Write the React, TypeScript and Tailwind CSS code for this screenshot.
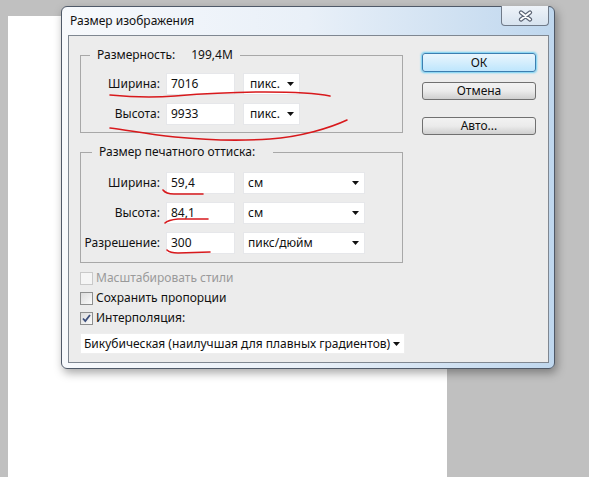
import React from 'react';
import clsx from 'clsx';

const Arrow = () => (
  <svg width="7" height="4" viewBox="0 0 7 4" className="shrink-0">
    <path d="M0 0h7L3.5 4z" fill="#111" />
  </svg>
);

interface SizeRowProps {
  label: string;
  value: string;
  unit: string;
  wide?: boolean;
}

const SizeRow: React.FC<SizeRowProps> = ({ label, value, unit, wide = false }) => (
  <div className="flex items-center h-[22px]">
    <span className="w-[79px] text-right">{label}</span>
    <div className="ml-[6px] w-[69px] h-[22px] bg-white border border-[#e6e7ea] pl-[4px] flex items-center">
      {value}
    </div>
    <div
      className={clsx(
        'ml-[8px] h-[22px] bg-white border border-[#e6e7ea] flex items-center justify-between pr-[5px]',
        wide ? 'w-[122px] pl-[4px]' : 'w-[57px] pl-[6px]'
      )}
    >
      <span>{unit}</span>
      <Arrow />
    </div>
  </div>
);

interface CheckRowProps {
  label: string;
  checked?: boolean;
  disabled?: boolean;
}

const CheckRow: React.FC<CheckRowProps> = ({ label, checked = false, disabled = false }) => (
  <div className="flex items-center h-[20px] gap-[3px]">
    <span
      className={clsx(
        'w-[13px] h-[13px] border flex items-center justify-center',
        disabled
          ? 'border-[#c9c9c9] bg-[#f5f5f5]'
          : 'border-[#8e8f8f] bg-linear-to-br from-[#dcdcdc] to-[#fbfbfb]'
      )}
    >
      {checked && (
        <svg width="9" height="9" viewBox="0 0 9 9">
          <path d="M1 4.5l2.3 2.6L8 1" fill="none" stroke="#3d4f7c" strokeWidth="1.8" />
        </svg>
      )}
    </span>
    <span className={disabled ? 'text-[#9a9a9a]' : ''}>{label}</span>
  </div>
);

const Button: React.FC<{ children: React.ReactNode; primary?: boolean; className?: string }> = ({
  children,
  primary = false,
  className,
}) => (
  <div
    className={clsx(
      'w-[114px] flex items-center justify-center rounded-[3px] border',
      primary
        ? 'h-[19px] border-[#3c7fb1] bg-linear-to-b from-[#eaf6fd] to-[#bee6fd] shadow-[0_0_2px_1px_#6fd0f5]'
        : 'h-[18px] border-[#707070] bg-linear-to-b from-[#f2f2f2] via-[#ebebeb] to-[#cfcfcf]',
      className
    )}
  >
    {children}
  </div>
);

export default function App() {
  return (
    <div className="relative w-[589px] h-[477px] overflow-hidden bg-[#c0c0c0] pt-[16px] pl-[8px] font-['Noto_Sans',sans-serif] text-[12px] text-[#111]">
      <div className="w-[439px] h-[461px] bg-white" />

      {/* dialog window */}
      <div className="absolute left-[61px] top-[6px] w-[494px] h-[363px] rounded-[6px] border border-[#4f5968] bg-linear-to-r from-[#f7f9fc] via-[#e9f0f8] to-[#bfd7ee] shadow-[2px_4px_10px_rgba(0,0,0,0.35)]">
        <div className="h-[28px] flex items-center pl-[8px] leading-none">Размер изображения</div>
        <div className="absolute top-[-1px] right-[5px] w-[48px] h-[20px] border border-t-0 border-[#6f7a89] rounded-b-[4px] bg-linear-to-b from-[#eef3f9] to-[#d7e3ef] flex items-center justify-center">
          <svg width="15" height="12" viewBox="0 0 15 12">
            <path d="M3 2.5l9 7M12 2.5l-9 7" stroke="#5b6474" strokeWidth="4.2" strokeLinecap="round" />
            <path d="M3 2.5l9 7M12 2.5l-9 7" stroke="#ffffff" strokeWidth="2" strokeLinecap="round" />
          </svg>
        </div>

        <div className="ml-[6px] w-[481px] h-[328px] border border-[#7f8791] bg-[#ececec] flex">
          <div className="w-[336px] pl-[11px] pt-[11px]">
            <fieldset className="w-[323px] border border-[#a8a8a8] pb-[7px]">
              <legend className="ml-[9px] px-[7px] leading-[16px]">
                Размерность:<span className="ml-[16px]">199,4M</span>
              </legend>
              <div className="mt-[10px] flex flex-col gap-[8px]">
                <SizeRow label="Ширина:" value="7016" unit="пикс." />
                <SizeRow label="Высота:" value="9933" unit="пикс." />
              </div>
            </fieldset>

            <fieldset className="mt-[11px] w-[323px] border border-[#a8a8a8] pb-[8px]">
              <legend className="ml-[11px] pl-[7px] pr-[18px] leading-[16px]">Размер печатного оттиска:</legend>
              <div className="mt-[12px] flex flex-col gap-[8px]">
                <SizeRow label="Ширина:" value="59,4" unit="см" wide />
                <SizeRow label="Высота:" value="84,1" unit="см" wide />
                <SizeRow label="Разрешение:" value="300" unit="пикс/дюйм" wide />
              </div>
            </fieldset>

            <div className="mt-[5px] flex flex-col">
              <CheckRow label="Масштабировать стили" disabled />
              <CheckRow label="Сохранить пропорции" />
              <CheckRow label="Интерполяция:" checked />
            </div>

            <div className="mt-[5px] w-[325px] h-[21px] bg-white border border-[#eeeeee] flex items-center justify-between pl-[3px] pr-[4px]">
              <span>Бикубическая (наилучшая для плавных градиентов)</span>
              <Arrow />
            </div>
          </div>

          <div className="ml-[17px] pt-[17px] flex flex-col">
            <Button primary>ОК</Button>
            <Button className="mt-[10px]">Отмена</Button>
            <Button className="mt-[17px]">Авто...</Button>
          </div>
        </div>
      </div>

      {/* red marker underlines */}
      <svg className="absolute inset-0 pointer-events-none" width="589" height="477" viewBox="0 0 589 477">
        <g fill="none" stroke="#d8191c" strokeWidth="1.6" strokeLinecap="round">
          <path d="M110 95 C 130 97, 150 98, 175 96 S 230 92, 265 92 S 315 93, 330 96" />
          <path d="M110 128 C 128 130, 145 134, 175 137 S 240 141, 270 139 S 330 128, 347 120" />
          <path d="M163 190 Q 166 194, 174 194 L 203 194" />
          <path d="M165 223 Q 168 220, 178 219 L 208 219" />
          <path d="M167 250 Q 170 253, 178 253 L 210 252" />
        </g>
      </svg>
    </div>
  );
}
